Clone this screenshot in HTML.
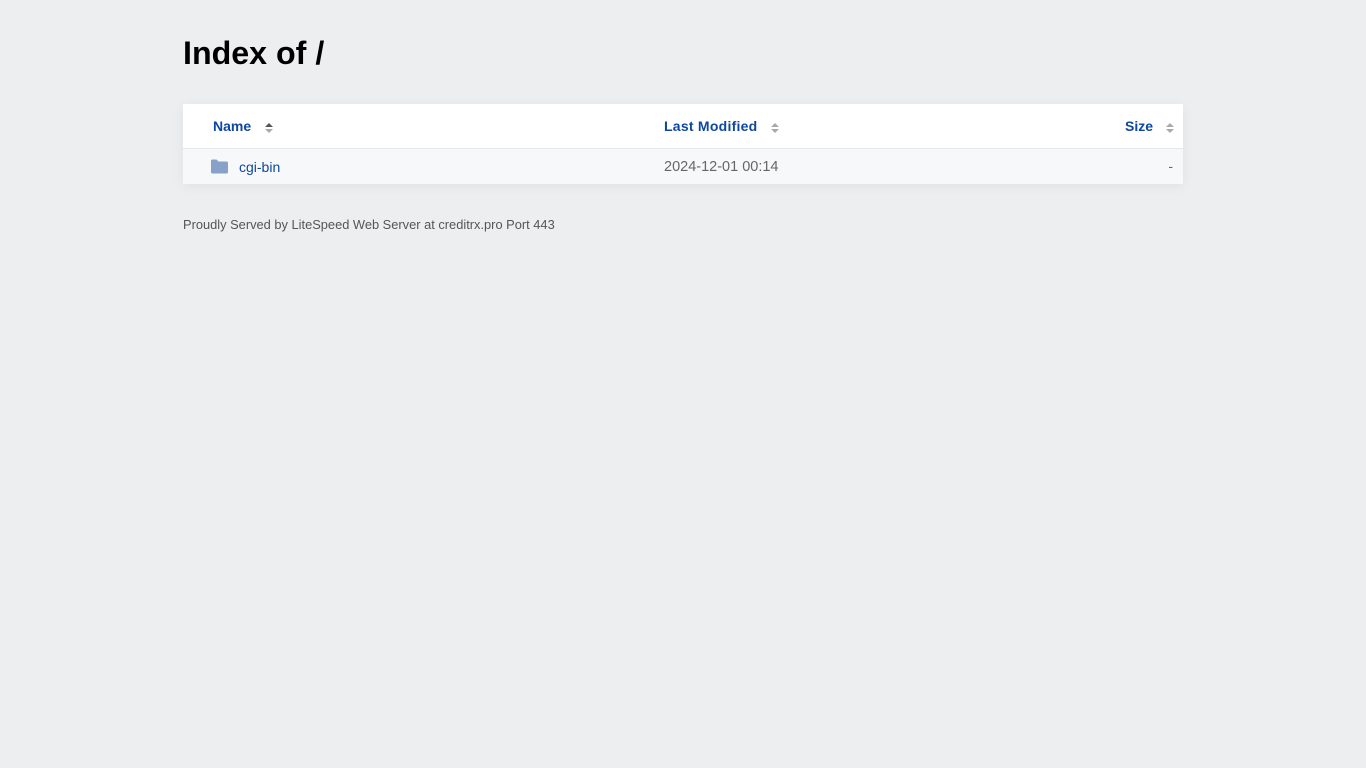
<!DOCTYPE html>
<html><head><meta charset="utf-8"><style>
body{margin:0;background:#edeef0;font-family:"Liberation Sans",sans-serif;}
.wrap{position:absolute;left:183px;top:0;width:1000px;}
h1{margin:0;position:absolute;top:35px;font-size:32.2px;font-weight:bold;color:#000;}
.tbl{position:absolute;top:104px;width:1000px;background:#fff;box-shadow:0 2px 12px rgba(0,0,0,0.06);}
.hdr{height:44px;border-bottom:1px solid #e5e7eb;position:relative;}
.row{height:35px;background:#f7f8fa;position:relative;}
.a{position:absolute;color:#0d47a1;font-size:14px;}
.b{font-weight:bold;}
.arr{position:absolute;width:0;height:0;}
.t{border-left:4px solid transparent;border-right:4px solid transparent;border-bottom:4px solid #aaa;}
.d{border-left:4px solid transparent;border-right:4px solid transparent;border-top:4px solid #aaa;}
.foot{position:absolute;top:217px;font-size:12.85px;color:#555;}
</style></head><body><div class="wrap">
<h1>Index of /</h1>
<div class="tbl">
<div class="hdr">
<span class="a b" style="left:30px;top:14px">Name</span>
<div class="arr t" style="left:82px;top:19px;border-bottom-color:#555"></div><div class="arr d" style="left:82px;top:25px;border-top-color:#aaa"></div>
<span class="a b" style="left:481px;top:14px;letter-spacing:0.25px">Last Modified</span>
<div class="arr t" style="left:588px;top:19px"></div><div class="arr d" style="left:588px;top:25px"></div>
<span class="a b" style="left:942px;top:14px">Size</span>
<div class="arr t" style="left:983px;top:19px"></div><div class="arr d" style="left:983px;top:25px"></div>
</div>
<div class="row">
<svg style="position:absolute;left:28px;top:10px" width="17" height="15" viewBox="0 0 17 15"><path d="M0 2a1.5 1.5 0 0 1 1.5-1.5h4l2 2h8A1.5 1.5 0 0 1 17 4v9a1.5 1.5 0 0 1-1.5 1.5h-14A1.5 1.5 0 0 1 0 13z" fill="#87a1c8"/></svg>
<span class="a" style="left:56px;top:10px">cgi-bin</span>
<span class="a" style="left:481px;top:10px;color:#666;font-size:14.5px">2024-12-01 00:14</span>
<span class="a" style="right:10px;top:9px;color:#666">-</span>
</div>
</div>
<div class="foot">Proudly Served by LiteSpeed Web Server at creditrx.pro Port 443</div>
</div></body></html>
